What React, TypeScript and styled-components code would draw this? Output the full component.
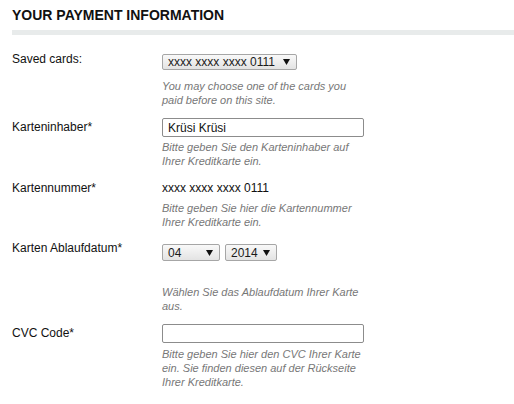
import React from "react";
import styled, { createGlobalStyle } from "styled-components";

const GlobalStyle = createGlobalStyle`
  html, body { margin: 0; padding: 0; background: #ffffff; }
  body { font-family: "Liberation Sans", Arial, sans-serif; color: #111; }
  * { box-sizing: border-box; }
`;

const Page = styled.div`
  padding: 0 0 0 12px;
  width: 514px;
`;

const Heading = styled.h2`
  margin: 0;
  padding-top: 7px;
  font-size: 14px;
  line-height: 17px;
  font-weight: bold;
  color: #111;
  letter-spacing: 0;
`;

const Divider = styled.div`
  margin-top: 6px;
  height: 5px;
  background: #e8ebeb;
`;

const Field = styled.div<{ $top: number }>`
  display: grid;
  grid-template-columns: 150px 210px;
  margin-top: ${(p) => p.$top}px;
`;

const Label = styled.label<{ $pad: number }>`
  grid-column: 1;
  grid-row: 1;
  padding-top: ${(p) => p.$pad}px;
  font-size: 12px;
  line-height: 15px;
  color: #111;
`;

const Control = styled.div<{ $pad: number }>`
  grid-column: 2;
  grid-row: 1;
  padding-top: ${(p) => p.$pad}px;
  display: flex;
  gap: 5px;
  align-items: flex-start;
`;

const Help = styled.p<{ $top: number }>`
  grid-column: 2;
  grid-row: 2;
  margin: ${(p) => p.$top}px 0 0 0;
  width: 203px;
  font-size: 11px;
  line-height: 14px;
  font-style: italic;
  color: #777;
`;

const TextInput = styled.input`
  width: 202px;
  height: 19px;
  border: 1px solid #8c8c8c;
  border-radius: 2px;
  padding: 0 5px;
  font-family: "Liberation Sans", Arial, sans-serif;
  font-size: 12px;
  color: #111;
  background: #fff;
  outline: none;
`;

const Value = styled.span`
  font-size: 12px;
  line-height: 15px;
  color: #111;
`;

const SelectBox = styled.div<{ $w: number; $h: number }>`
  width: ${(p) => p.$w}px;
  height: ${(p) => p.$h}px;
  display: flex;
  align-items: center;
  justify-content: space-between;
  padding: 0 6px 0 5px;
  border: 1px solid #a6a6a6;
  border-radius: 2px;
  background: linear-gradient(#f9f9f9, #e3e3e3);
  font-size: 12px;
  color: #1a1a1a;
  line-height: 1;
  cursor: default;
`;

const Arrow = () => (
  <svg width="7" height="6" viewBox="0 0 7 6" aria-hidden="true">
    <polygon points="0,0 7,0 3.5,6" fill="#111" />
  </svg>
);

const Select = ({ value, w, h }: { value: string; w: number; h: number }) => (
  <SelectBox role="combobox" $w={w} $h={h}>
    <span>{value}</span>
    <Arrow />
  </SelectBox>
);

export default function App() {
  return (
    <Page>
      <GlobalStyle />
      <Heading>YOUR PAYMENT INFORMATION</Heading>
      <Divider />

      <Field $top={17}>
        <Label $pad={0}>Saved cards:</Label>
        <Control $pad={2}>
          <Select value="xxxx xxxx xxxx 0111" w={135} h={16} />
        </Control>
        <Help $top={9}>You may choose one of the cards you paid before on this site.</Help>
      </Field>

      <Field $top={11}>
        <Label $pad={2}>Karteninhaber*</Label>
        <Control $pad={0}>
          <TextInput defaultValue="Krüsi Krüsi" />
        </Control>
        <Help $top={3}>Bitte geben Sie den Karteninhaber auf Ihrer Kreditkarte ein.</Help>
      </Field>

      <Field $top={13}>
        <Label $pad={0}>Kartennummer*</Label>
        <Control $pad={0}>
          <Value>xxxx xxxx xxxx 0111</Value>
        </Control>
        <Help $top={5}>Bitte geben Sie hier die Kartennummer Ihrer Kreditkarte ein.</Help>
      </Field>

      <Field $top={12}>
        <Label $pad={0}>Karten Ablaufdatum*</Label>
        <Control $pad={3}>
          <Select value="04" w={58} h={17} />
          <Select value="2014" w={52} h={17} />
        </Control>
        <Help $top={24}>Wählen Sie das Ablaufdatum Ihrer Karte aus.</Help>
      </Field>

      <Field $top={11}>
        <Label $pad={2}>CVC Code*</Label>
        <Control $pad={0}>
          <TextInput defaultValue="" />
        </Control>
        <Help $top={4}>
          Bitte geben Sie hier den CVC Ihrer Karte ein. Sie finden diesen auf der Rückseite Ihrer Kreditkarte.
        </Help>
      </Field>
    </Page>
  );
}
